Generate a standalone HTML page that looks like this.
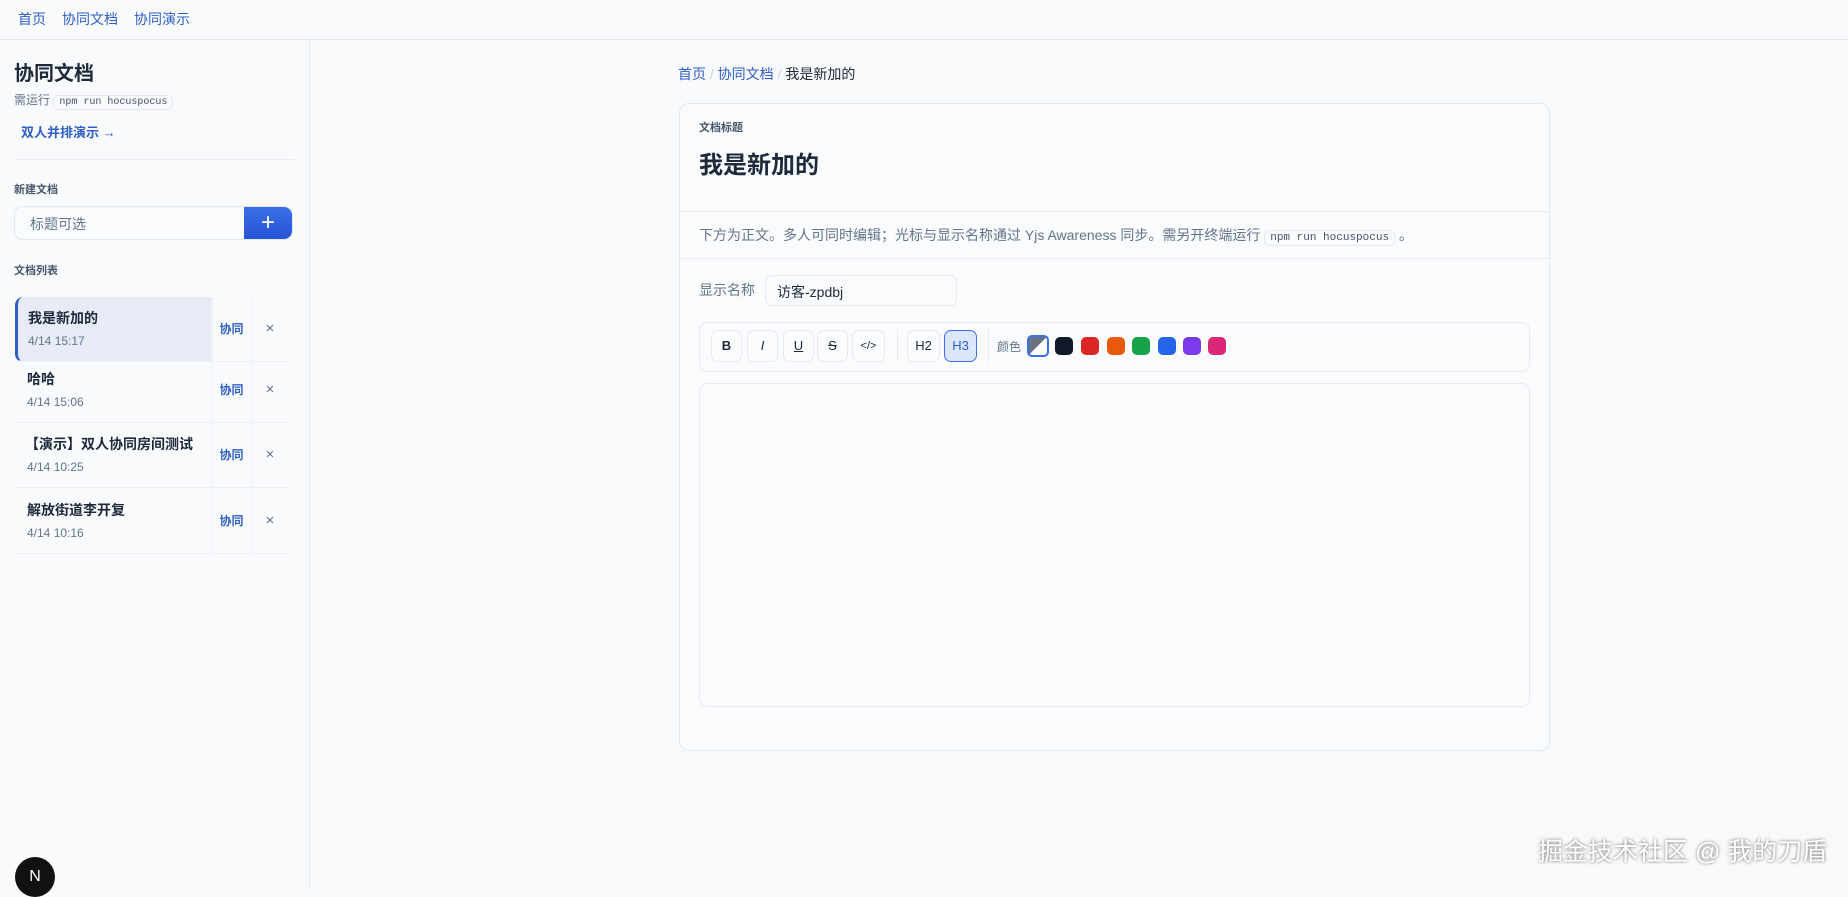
<!DOCTYPE html>
<html><head><meta charset="utf-8"><style>
*{box-sizing:border-box;margin:0;padding:0}
body{width:1848px;height:890px;overflow:hidden;background:#f7f9fb;font-family:"Liberation Sans","Noto Sans CJK SC",sans-serif;color:#1e293b;position:relative}
.nav{position:absolute;left:0;top:0;width:1848px;height:40px;border-bottom:1px solid #e5e9ef;background:#f8fafc}
.nav a{position:absolute;top:9px;font-size:14px;color:#2f5fc4;text-decoration:none}
.side{position:absolute;left:0;top:40px;width:310px;height:850px;border-right:1px solid #e3e8ee;background:#f8fafc}
.abs{position:absolute}
code{font-family:"Liberation Mono",monospace}
.item{position:absolute;left:15px;width:273px;height:65px;border-bottom:1px solid #edf0f4}
.item .t{position:absolute;left:12px;top:11px;font-size:14px;font-weight:bold;color:#1e293b}
.item .d{position:absolute;left:12px;top:37px;font-size:12px;color:#64748b}
.item .c{position:absolute;left:196px;top:0;width:41px;height:64px;border-left:1px solid #eef1f5;border-right:1px solid #eef1f5;font-size:12px;font-weight:bold;color:#2f5fc4;text-align:center;line-height:64px}
.item .x{position:absolute;left:237px;top:0;width:36px;height:64px;text-align:center;line-height:64px;font-size:15px;color:#64748b}
.card{position:absolute;left:679px;top:103px;width:871px;height:648px;border:1px solid #e2e8f0;border-radius:10px;background:#f9fbfc}
.tb{position:absolute;top:7px;height:32px;width:31px;border:1px solid #e6eaf0;border-radius:7px;background:#fbfcfd;font-size:13px;text-align:center;line-height:30px;color:#1e293b}
.sw{position:absolute;top:14px;width:18px;height:18px;border-radius:5px}
</style></head><body>
<div class="nav"><a style="left:18px">首页</a><a style="left:62px">协同文档</a><a style="left:134px">协同演示</a></div>
<div class="side">
 <div class="abs" style="left:14px;top:17px;font-size:20px;font-weight:bold;color:#1e293b">协同文档</div>
 <div class="abs" style="left:14px;top:51px;font-size:12px;color:#64748b">需运行 <code style="font-size:10px;border:1px solid #e5e9ef;border-radius:5px;padding:1px 5px;color:#475569">npm run hocuspocus</code></div>
 <div class="abs" style="left:21px;top:82px;font-size:13px;font-weight:bold;color:#2f5fc4">双人并排演示 →</div>
 <div class="abs" style="left:14px;top:119px;width:280px;height:1px;background:#e8ecf1"></div>
 <div class="abs" style="left:14px;top:141px;font-size:11px;font-weight:bold;color:#475569">新建文档</div>
 <div class="abs" style="left:14px;top:166px;width:279px;height:34px;border:1px solid #e2e8f0;border-radius:9px;background:#f9fbfc;overflow:hidden">
  <span class="abs" style="left:15px;top:7px;font-size:14px;color:#64748b">标题可选</span>
  <div class="abs" style="right:0;top:0;width:48px;height:34px;background:linear-gradient(#3b6fe6,#2452d6);color:#fff;font-size:24px;text-align:center;line-height:32px">+</div>
 </div>
 <div class="abs" style="left:14px;top:222px;font-size:11px;font-weight:bold;color:#475569">文档列表</div>
</div>
<div class="item" style="top:297px;background:linear-gradient(90deg,#e6ebf5 72%,transparent 72%);border-left:3px solid #2f5fc4;border-radius:8px 0 0 8px;left:15px"><div class="t" style="left:10px">我是新加的</div><div class="d" style="left:10px">4/14 15:17</div><div class="c" style="left:193px">协同</div><div class="x" style="left:234px">×</div></div>
<div class="item" style="top:358px"><div class="t">哈哈</div><div class="d">4/14 15:06</div><div class="c">协同</div><div class="x">×</div></div>
<div class="item" style="top:423px"><div class="t" style="left:10px">【演示】双人协同房间测试</div><div class="d">4/14 10:25</div><div class="c">协同</div><div class="x">×</div></div>
<div class="item" style="top:489px"><div class="t">解放街道李开复</div><div class="d">4/14 10:16</div><div class="c">协同</div><div class="x">×</div></div>

<div class="abs" style="left:678px;top:64px;font-size:14px"><span style="color:#2f5fc4">首页</span> <span style="color:#cbd5e1">/</span> <span style="color:#2f5fc4">协同文档</span> <span style="color:#cbd5e1">/</span> <span style="color:#1e293b">我是新加的</span></div>
<div class="card">
 <div class="abs" style="left:19px;top:15px;font-size:11px;font-weight:bold;color:#475569">文档标题</div>
 <div class="abs" style="left:19px;top:41px;font-size:24px;font-weight:bold;color:#1e293b">我是新加的</div>
 <div class="abs" style="left:0;top:107px;width:869px;height:1px;background:#e8ecf1"></div>
 <div class="abs" style="left:19px;top:121px;font-size:14px;color:#64748b">下方为正文。多人可同时编辑；光标与显示名称通过 Yjs Awareness 同步。需另开终端运行 <code style="font-size:11px;border:1px solid #e5e9ef;border-radius:5px;padding:1px 5px;color:#475569">npm run hocuspocus</code> 。</div>
 <div class="abs" style="left:0;top:154px;width:869px;height:1px;background:#e8ecf1"></div>
 <div class="abs" style="left:19px;top:176px;font-size:14px;color:#64748b">显示名称</div>
 <div class="abs" style="left:85px;top:171px;width:192px;height:31px;border:1px solid #e6eaf0;border-radius:7px;font-size:14px;color:#1e293b;padding:6px 11px">访客-zpdbj</div>
 <div class="abs" style="left:19px;top:218px;width:831px;height:50px;border:1px solid #e6eaf0;border-radius:9px;background:#fafbfd">
  <div class="tb" style="left:11px;font-weight:bold">B</div>
  <div class="tb" style="left:47px;font-style:italic">I</div>
  <div class="tb" style="left:83px;text-decoration:underline">U</div>
  <div class="tb" style="left:117px;text-decoration:line-through">S</div>
  <div class="tb" style="left:152px;width:33px;font-size:11px">&lt;/&gt;</div>
  <div class="abs" style="left:197px;top:7px;width:1px;height:32px;background:#e6eaf0"></div>
  <div class="tb" style="left:207px;width:33px">H2</div>
  <div class="tb" style="left:244px;width:33px;background:#dbe6fb;border-color:#3b6fe6;color:#2f5fc4">H3</div>
  <div class="abs" style="left:288px;top:7px;width:1px;height:32px;background:#e6eaf0"></div>
  <div class="abs" style="left:297px;top:15px;font-size:12px;color:#64748b">颜色</div>
  <div class="sw" style="left:327px;top:12px;width:22px;height:22px;border:2px solid #3b6fe6;background:linear-gradient(135deg,#6b7280 50%,#fff 50%)"></div>
  <div class="sw" style="left:355px;top:14px;background:#111827"></div>
  <div class="sw" style="left:381px;background:#dc2626"></div>
  <div class="sw" style="left:407px;background:#ea580c"></div>
  <div class="sw" style="left:432px;background:#16a34a"></div>
  <div class="sw" style="left:458px;background:#2563eb"></div>
  <div class="sw" style="left:483px;background:#7c3aed"></div>
  <div class="sw" style="left:508px;background:#db2777"></div>
 </div>
 <div class="abs" style="left:19px;top:279px;width:831px;height:324px;border:1px solid #e6eaf0;border-radius:9px;background:#fafbfd"></div>
</div>
<div class="abs" style="left:1538px;top:832px;font-size:25px;color:#fff;text-shadow:0 0 3px rgba(0,0,0,.6)">掘金技术社区 @ 我的刀盾</div>
<div class="abs" style="left:15px;top:857px;width:40px;height:40px;border-radius:50%;background:#111;color:#fff;text-align:center;line-height:40px;font-size:16px">N</div>
</body></html>
